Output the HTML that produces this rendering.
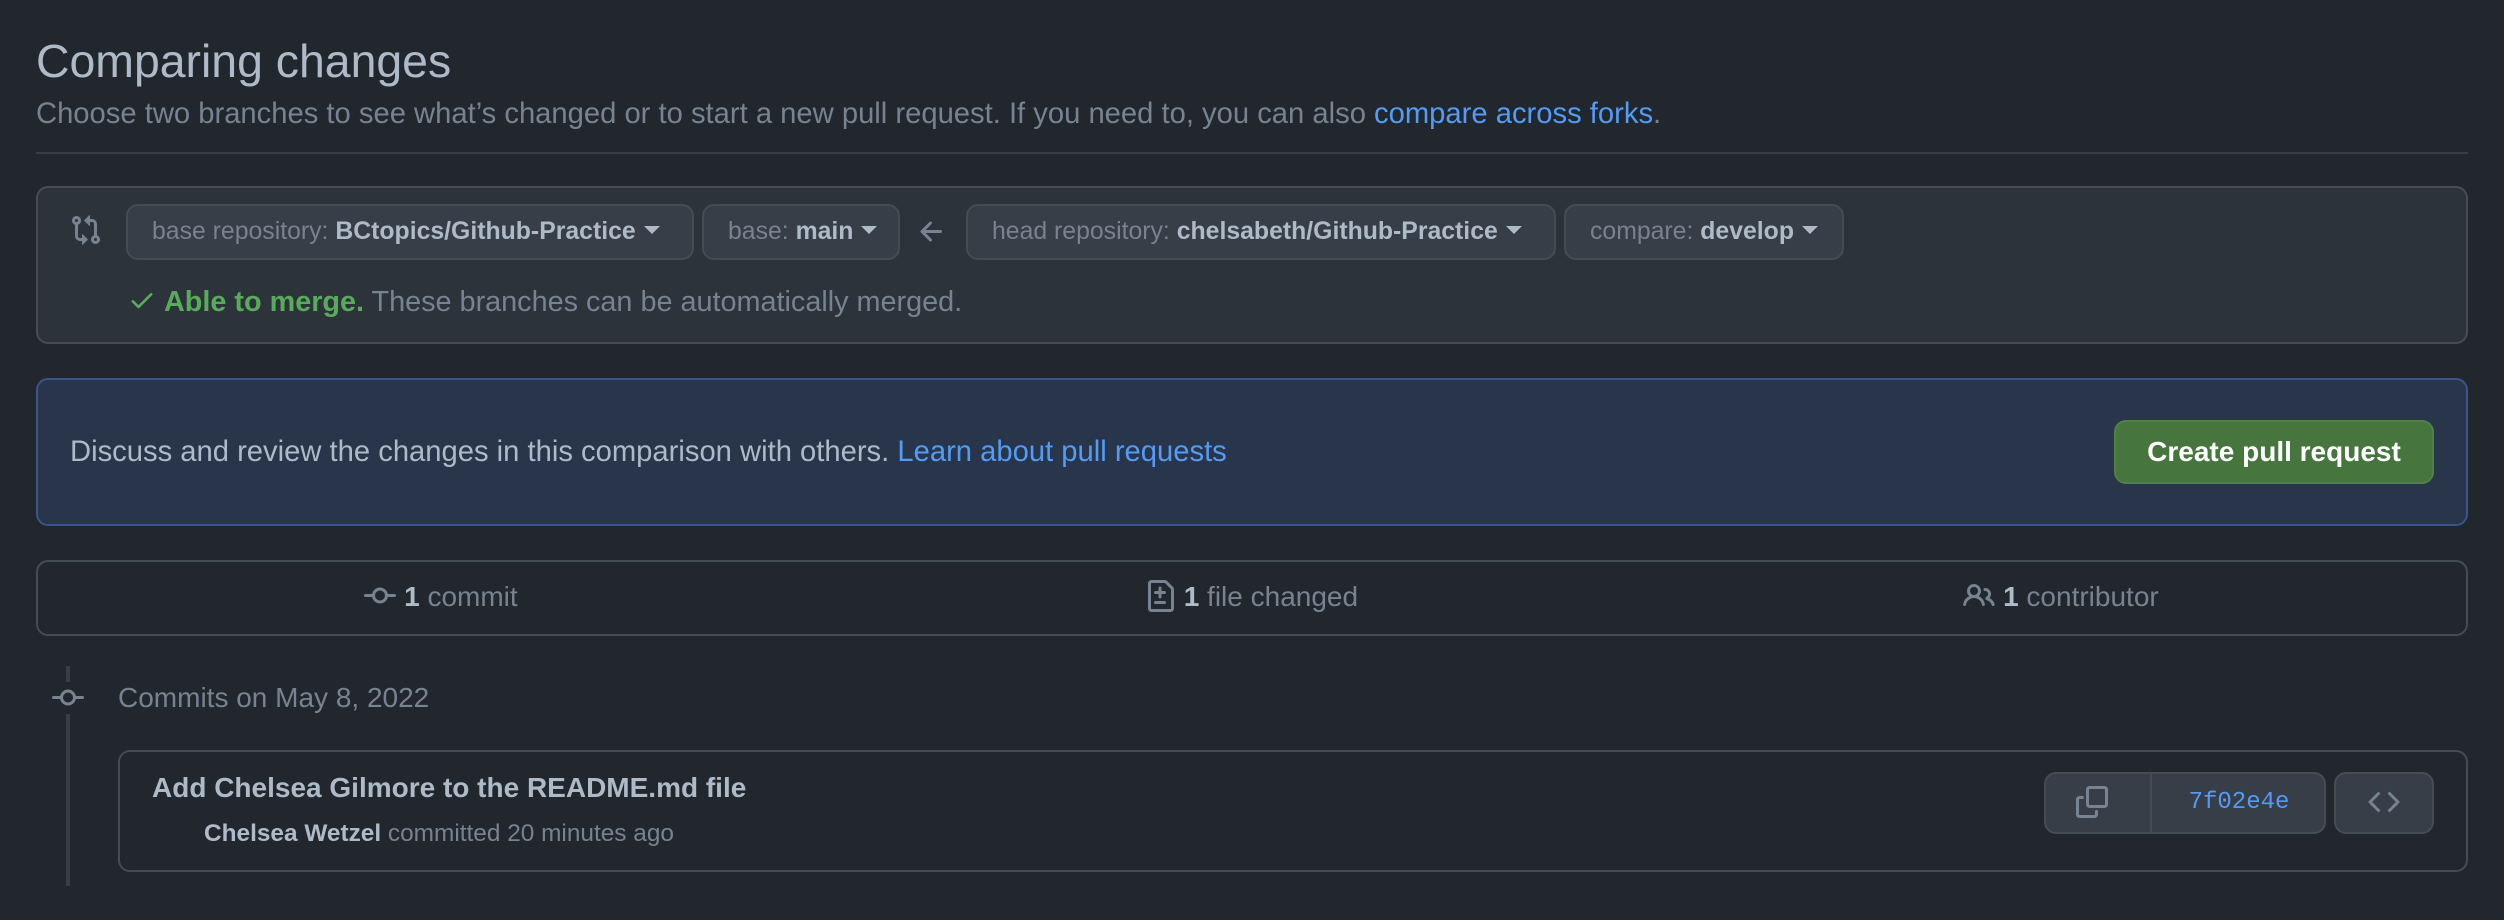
<!DOCTYPE html>
<html><head><meta charset="utf-8"><style>
html,body{margin:0;padding:0}
body{width:2504px;height:920px;background:#22272e;overflow:hidden}
#w{zoom:2;width:1252px;height:460px;position:relative;font-family:"Liberation Sans",sans-serif;color:#adbac7}
.a{position:absolute}
h1{position:absolute;left:18px;top:17px;margin:0;font-size:23.2px;font-weight:400;color:#adbac7}
.sub{left:18px;top:49px;font-size:14.6px;color:#768390;white-space:nowrap}
a{color:#539bf5;text-decoration:none}
.hr{left:18px;top:76px;width:1216px;height:1px;background:#373e47}
.box{border:1px solid #444c56;border-radius:6px;box-sizing:border-box}
.btn{position:absolute;top:102px;height:28px;box-sizing:border-box;border:1px solid #444c56;border-radius:6px;background:#373e47;font-size:12.4px;line-height:26px;padding:0 12px;color:#768390;white-space:nowrap}
.btn b{color:#adbac7}
.car{display:inline-block;width:0;height:0;border-left:4px solid transparent;border-right:4px solid transparent;border-top:4px solid #adbac7;vertical-align:middle;margin-left:4px;margin-top:-2px}
.m{font-size:14px;white-space:nowrap}
svg{display:block}
</style></head><body><div id="w">
<h1>Comparing changes</h1>
<div class="a sub">Choose two branches to see what’s changed or to start a new pull request. If you need to, you can also <a>compare across forks</a>.</div>
<div class="a hr"></div>

<div class="a box" style="left:18px;top:93px;width:1216px;height:79px;background:#2d333b"></div>
<svg class="a" style="left:35px;top:107px" width="16" height="16" viewBox="0 0 16 16" fill="#768390"><path d="M9.573.677A.25.25 0 0110 .854V2.5h1A2.5 2.5 0 0113.5 5v5.628a2.251 2.251 0 11-1.5 0V5a1 1 0 00-1-1h-1v1.646a.25.25 0 01-.427.177L7.177 3.427a.25.25 0 010-.354L9.573.677zM6 12v-1.646a.25.25 0 01.427-.177l2.396 2.396a.25.25 0 010 .354l-2.396 2.396A.25.25 0 016 15.146V13.5H5A2.5 2.5 0 012.5 11V5.372a2.25 2.25 0 111.5 0V11a1 1 0 001 1h1zm6.75 0a.75.75 0 100 1.5.75.75 0 000-1.5zM4 3.25a.75.75 0 10-1.5 0 .75.75 0 001.5 0z"/></svg>
<div class="btn" style="left:63px;width:284px">base repository: <b>BCtopics/Github-Practice</b><span class="car"></span></div>
<div class="btn" style="left:351px;width:99px">base: <b>main</b><span class="car"></span></div>
<svg class="a" style="left:458px;top:108px" width="16" height="16" viewBox="0 0 16 16" fill="#768390"><path d="M7.78 12.53a.75.75 0 01-1.06 0L2.47 8.28a.75.75 0 010-1.06l4.25-4.25a.75.75 0 011.06 1.06L4.81 7h7.44a.75.75 0 010 1.5H4.81l2.97 2.97a.75.75 0 010 1.06z"/></svg>
<div class="btn" style="left:483px;width:295px">head repository: <b>chelsabeth/Github-Practice</b><span class="car"></span></div>
<div class="btn" style="left:782px;width:140px">compare: <b>develop</b><span class="car"></span></div>
<svg class="a" style="left:64px;top:143px" width="14" height="14" viewBox="0 0 16 16" fill="#57ab5a"><path d="M13.78 4.22a.75.75 0 010 1.06l-7.25 7.25a.75.75 0 01-1.06 0L2.22 9.28a.75.75 0 011.06-1.06L6 10.94l6.72-6.72a.75.75 0 011.06 0z"/></svg>
<div class="a m" style="left:82px;top:143px;color:#768390;font-size:14.4px"><b style="color:#57ab5a">Able to merge.</b> These branches can be automatically merged.</div>

<div class="a box" style="left:18px;top:189px;width:1216px;height:74px;background:#29354a;border-color:#36558a"></div>
<div class="a m" style="left:35px;top:218px;color:#adbac7;font-size:14.6px">Discuss and review the changes in this comparison with others. <a>Learn about pull requests</a></div>
<div class="a" style="left:1057px;top:210px;width:160px;height:32px;box-sizing:border-box;border:1px solid #4f8046;border-radius:6px;background:#46763e;color:#fff;font-size:14px;font-weight:700;line-height:30px;text-align:center">Create pull request</div>

<div class="a box" style="left:18px;top:280px;width:1216px;height:38px"></div>
<div class="a m" style="left:18px;top:290px;width:405px;text-align:center;color:#768390"><svg style="display:inline-block;vertical-align:-3px" width="16" height="16" viewBox="0 0 16 16" fill="#768390"><path d="M11.93 8.5a4.002 4.002 0 01-7.86 0H.75a.75.75 0 010-1.5h3.32a4.002 4.002 0 017.86 0h3.32a.75.75 0 010 1.5zm-1.43-.75a2.5 2.5 0 10-5 0 2.5 2.5 0 005 0z"/></svg> <b style="color:#adbac7">1</b> commit</div>
<div class="a m" style="left:423px;top:290px;width:405px;text-align:center;color:#768390"><svg style="display:inline-block;vertical-align:-3px" width="16" height="16" viewBox="0 0 16 16" fill="#768390"><path d="M2 1.75C2 .784 2.784 0 3.75 0h6.586c.464 0 .909.184 1.237.513l2.914 2.914c.329.328.513.773.513 1.237v9.586A1.750 1.750 0 0113.25 16h-9.5A1.75 1.75 0 012 14.25V1.75zm1.75-.25a.25.25 0 00-.25.25v12.5c0 .138.112.25.25.25h9.5a.25.25 0 00.25-.25V4.664a.25.25 0 00-.073-.177l-2.914-2.914a.25.25 0 00-.177-.073H3.75zM8 3.25a.75.75 0 01.75.75v1.5h1.5a.75.75 0 010 1.5h-1.5v1.5a.75.75 0 01-1.5 0V7h-1.5a.75.75 0 010-1.5h1.5V4A.75.75 0 018 3.25zm-3 8a.75.75 0 01.75-.75h4.5a.75.75 0 010 1.5h-4.5a.75.75 0 01-.75-.75z"/></svg> <b style="color:#adbac7">1</b> file changed</div>
<div class="a m" style="left:828px;top:290px;width:405px;text-align:center;color:#768390"><svg style="display:inline-block;vertical-align:-3px" width="16" height="16" viewBox="0 0 16 16" fill="#768390"><path d="M5.5 3.5a2 2 0 100 4 2 2 0 000-4zM2 5.5a3.5 3.5 0 115.898 2.549 5.507 5.507 0 013.034 4.084.75.75 0 11-1.482.235 4.001 4.001 0 00-7.9 0 .75.75 0 01-1.482-.236A5.507 5.507 0 013.102 8.05 3.49 3.49 0 012 5.5zM11 4a.75.75 0 100 1.5 1.5 1.5 0 01.666 2.844.75.75 0 00-.416.672v.352a.75.75 0 00.574.73c1.2.289 2.162 1.2 2.522 2.372a.75.75 0 101.434-.44 5.01 5.01 0 00-2.56-3.012A3 3 0 0011 4z"/></svg> <b style="color:#adbac7">1</b> contributor</div>

<div class="a" style="left:33px;top:333px;width:2px;height:110px;background:#373e47"></div>
<div class="a" style="left:26px;top:341px;width:16px;height:16px;background:#22272e"></div>
<svg class="a" style="left:26px;top:341px" width="16" height="16" viewBox="0 0 16 16" fill="#768390"><path d="M11.93 8.5a4.002 4.002 0 01-7.86 0H.75a.75.75 0 010-1.5h3.32a4.002 4.002 0 017.86 0h3.32a.75.75 0 010 1.5zm-1.43-.75a2.5 2.5 0 10-5 0 2.5 2.5 0 005 0z"/></svg>
<div class="a m" style="left:59px;top:341px;color:#768390">Commits on May 8, 2022</div>

<div class="a box" style="left:59px;top:375px;width:1175px;height:61px"></div>
<div class="a" style="left:76px;top:386px;font-size:14px;font-weight:700;color:#adbac7;white-space:nowrap">Add Chelsea Gilmore to the README.md file</div>
<div class="a" style="left:102px;top:410px;font-size:12.2px;color:#768390;white-space:nowrap"><b style="color:#adbac7">Chelsea Wetzel</b> committed 20 minutes ago</div>
<div class="a" style="left:1022px;top:386px;width:141px;height:31px;box-sizing:border-box;border:1px solid #444c56;border-radius:6px;background:#373e47"></div>
<div class="a" style="left:1075px;top:387px;width:1px;height:29px;background:#444c56"></div>
<svg class="a" style="left:1038px;top:393px" width="16" height="16" viewBox="0 0 16 16" fill="#768390"><path d="M0 6.75C0 5.784.784 5 1.75 5h1.5a.75.75 0 010 1.5h-1.5a.25.25 0 00-.25.25v7.5c0 .138.112.25.25.25h7.5a.25.25 0 00.25-.25v-1.5a.75.75 0 011.5 0v1.5A1.75 1.75 0 019.25 16h-7.5A1.75 1.75 0 010 14.25v-7.5z"/><path d="M5 1.75C5 .784 5.784 0 6.750 0h7.5C15.216 0 16 .784 16 1.75v7.5A1.75 1.75 0 0114.25 11h-7.5A1.75 1.75 0 015 9.25v-7.5zm1.75-.25a.25.25 0 00-.25.25v7.5c0 .138.112.25.25.25h7.5a.25.25 0 00.25-.25v-7.5a.25.25 0 00-.25-.25h-7.5z"/></svg>
<div class="a" style="left:1076px;top:386px;width:87px;line-height:31px;text-align:center;font-family:'Liberation Mono',monospace;font-size:12px;color:#539bf5">7f02e4e</div>
<div class="a" style="left:1167px;top:386px;width:50px;height:31px;box-sizing:border-box;border:1px solid #444c56;border-radius:6px;background:#373e47"></div>
<svg class="a" style="left:1184px;top:393px" width="16" height="16" viewBox="0 0 16 16" fill="#768390"><path d="M4.72 3.22a.75.75 0 011.06 1.06L2.06 8l3.72 3.72a.75.75 0 11-1.06 1.06L.47 8.53a.75.75 0 010-1.06l4.25-4.25zm6.56 0a.75.75 0 10-1.06 1.06L13.94 8l-3.72 3.72a.75.75 0 101.06 1.06l4.25-4.25a.75.75 0 000-1.06l-4.25-4.25z"/></svg>
</div></body></html>
